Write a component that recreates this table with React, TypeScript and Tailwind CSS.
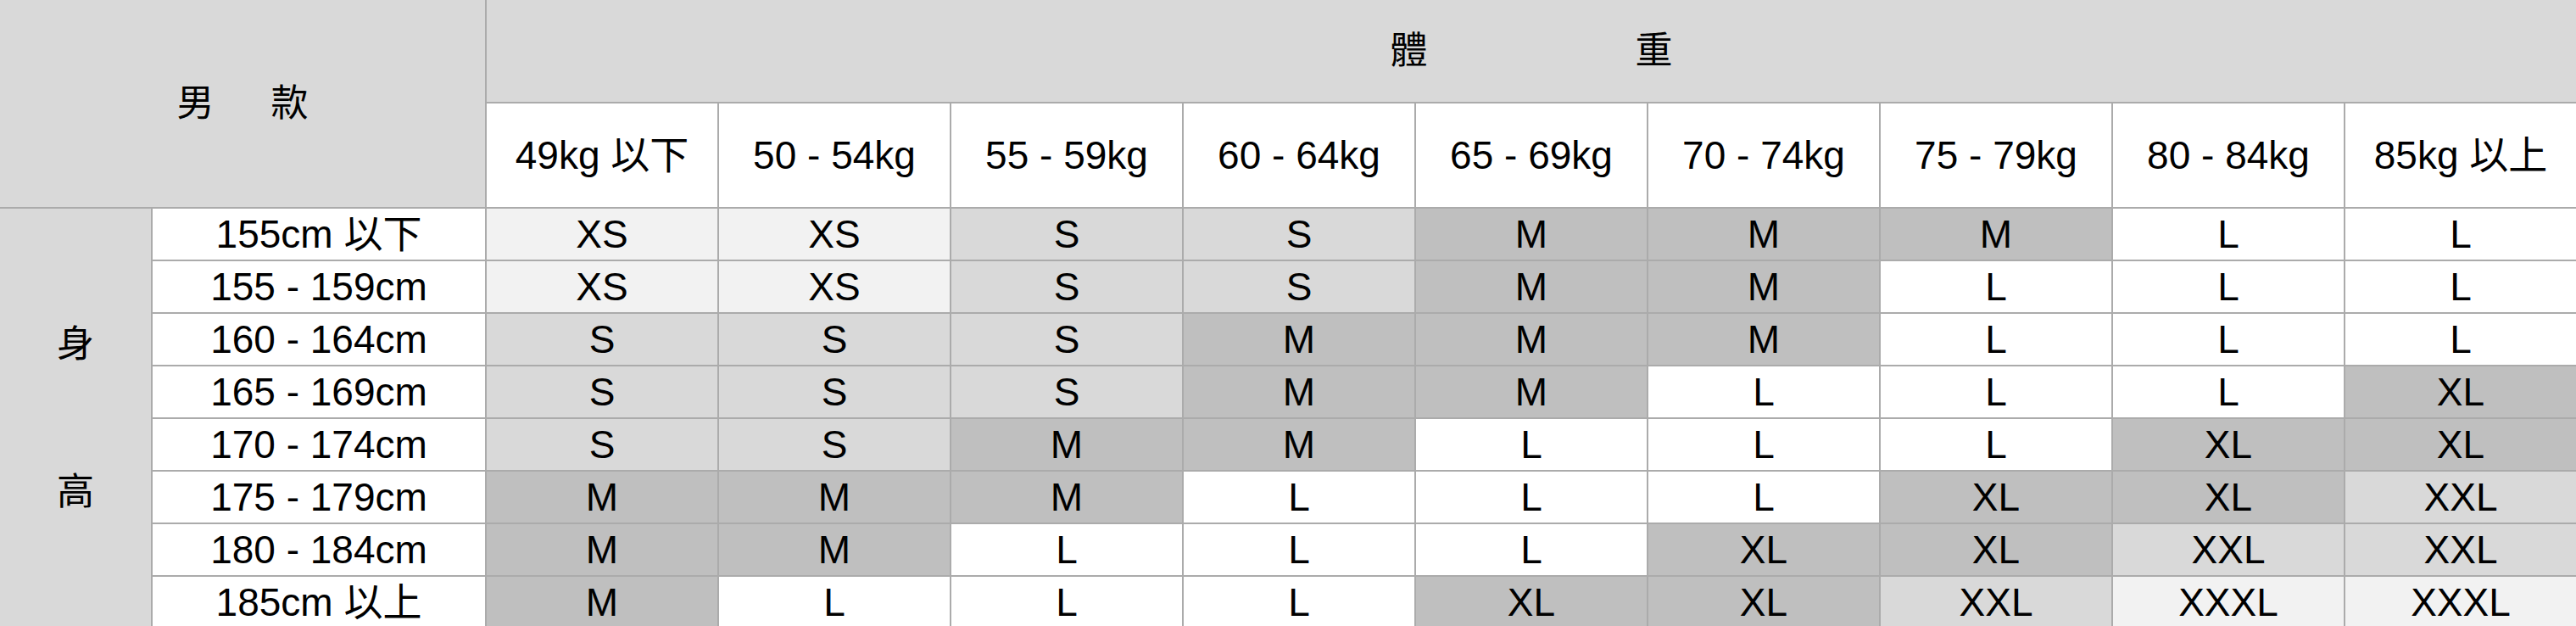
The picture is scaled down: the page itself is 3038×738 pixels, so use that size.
import React from "react";

const weights = [
  "49kg 以下",
  "50 - 54kg",
  "55 - 59kg",
  "60 - 64kg",
  "65 - 69kg",
  "70 - 74kg",
  "75 - 79kg",
  "80 - 84kg",
  "85kg 以上",
];

const rows = [
  { label: "155cm 以下", sizes: ["XS", "XS", "S", "S", "M", "M", "M", "L", "L"] },
  { label: "155 - 159cm", sizes: ["XS", "XS", "S", "S", "M", "M", "L", "L", "L"] },
  { label: "160 - 164cm", sizes: ["S", "S", "S", "M", "M", "M", "L", "L", "L"] },
  { label: "165 - 169cm", sizes: ["S", "S", "S", "M", "M", "L", "L", "L", "XL"] },
  { label: "170 - 174cm", sizes: ["S", "S", "M", "M", "L", "L", "L", "XL", "XL"] },
  { label: "175 - 179cm", sizes: ["M", "M", "M", "L", "L", "L", "XL", "XL", "XXL"] },
  { label: "180 - 184cm", sizes: ["M", "M", "L", "L", "L", "XL", "XL", "XXL", "XXL"] },
  { label: "185cm 以上", sizes: ["M", "L", "L", "L", "XL", "XL", "XXL", "XXXL", "XXXL"] },
];

// shade per size, like the spreadsheet fills
const fill: Record<string, string> = {
  XS: "bg-[#f2f2f2]",
  S: "bg-[#d9d9d9]",
  M: "bg-[#bfbfbf]",
  L: "bg-white",
  XL: "bg-[#bfbfbf]",
  XXL: "bg-[#d9d9d9]",
  XXXL: "bg-[#f2f2f2]",
};

export default function App() {
  return (
    <div className="h-[738px] w-[3038px] overflow-hidden bg-white font-['Liberation_Sans','Noto_Sans_CJK_TC',sans-serif] text-[46px] leading-none text-black">
      <div className="grid grid-cols-[178px_392px_repeat(9,272px)] grid-rows-[120px_122px_repeat(8,60px)] gap-[2px] bg-[#ababab]">
        {/* corner title */}
        <div className="col-span-2 row-span-2 flex items-center justify-center gap-[67px] bg-[#d9d9d9] text-[44px]">
          <span>男</span>
          <span>款</span>
        </div>

        {/* weight group title */}
        <div className="col-span-9 flex items-center justify-center gap-[245px] bg-[#d9d9d9] text-[44px]">
          <span>體</span>
          <span>重</span>
        </div>

        {weights.map((w) => (
          <div key={w} className="flex items-center justify-center bg-white">
            {w}
          </div>
        ))}

        {/* height group title, spans all body rows */}
        <div className="col-start-1 row-span-8 row-start-3 flex flex-col items-center justify-center gap-[130px] bg-[#d9d9d9] text-[44px]">
          <span>身</span>
          <span>高</span>
        </div>

        {rows.map((row) => (
          <React.Fragment key={row.label}>
            <div className="col-start-2 flex items-center justify-center bg-white">
              {row.label}
            </div>
            {row.sizes.map((s, i) => (
              <div key={i} className={`flex items-center justify-center ${fill[s]}`}>
                {s}
              </div>
            ))}
          </React.Fragment>
        ))}
      </div>
    </div>
  );
}
